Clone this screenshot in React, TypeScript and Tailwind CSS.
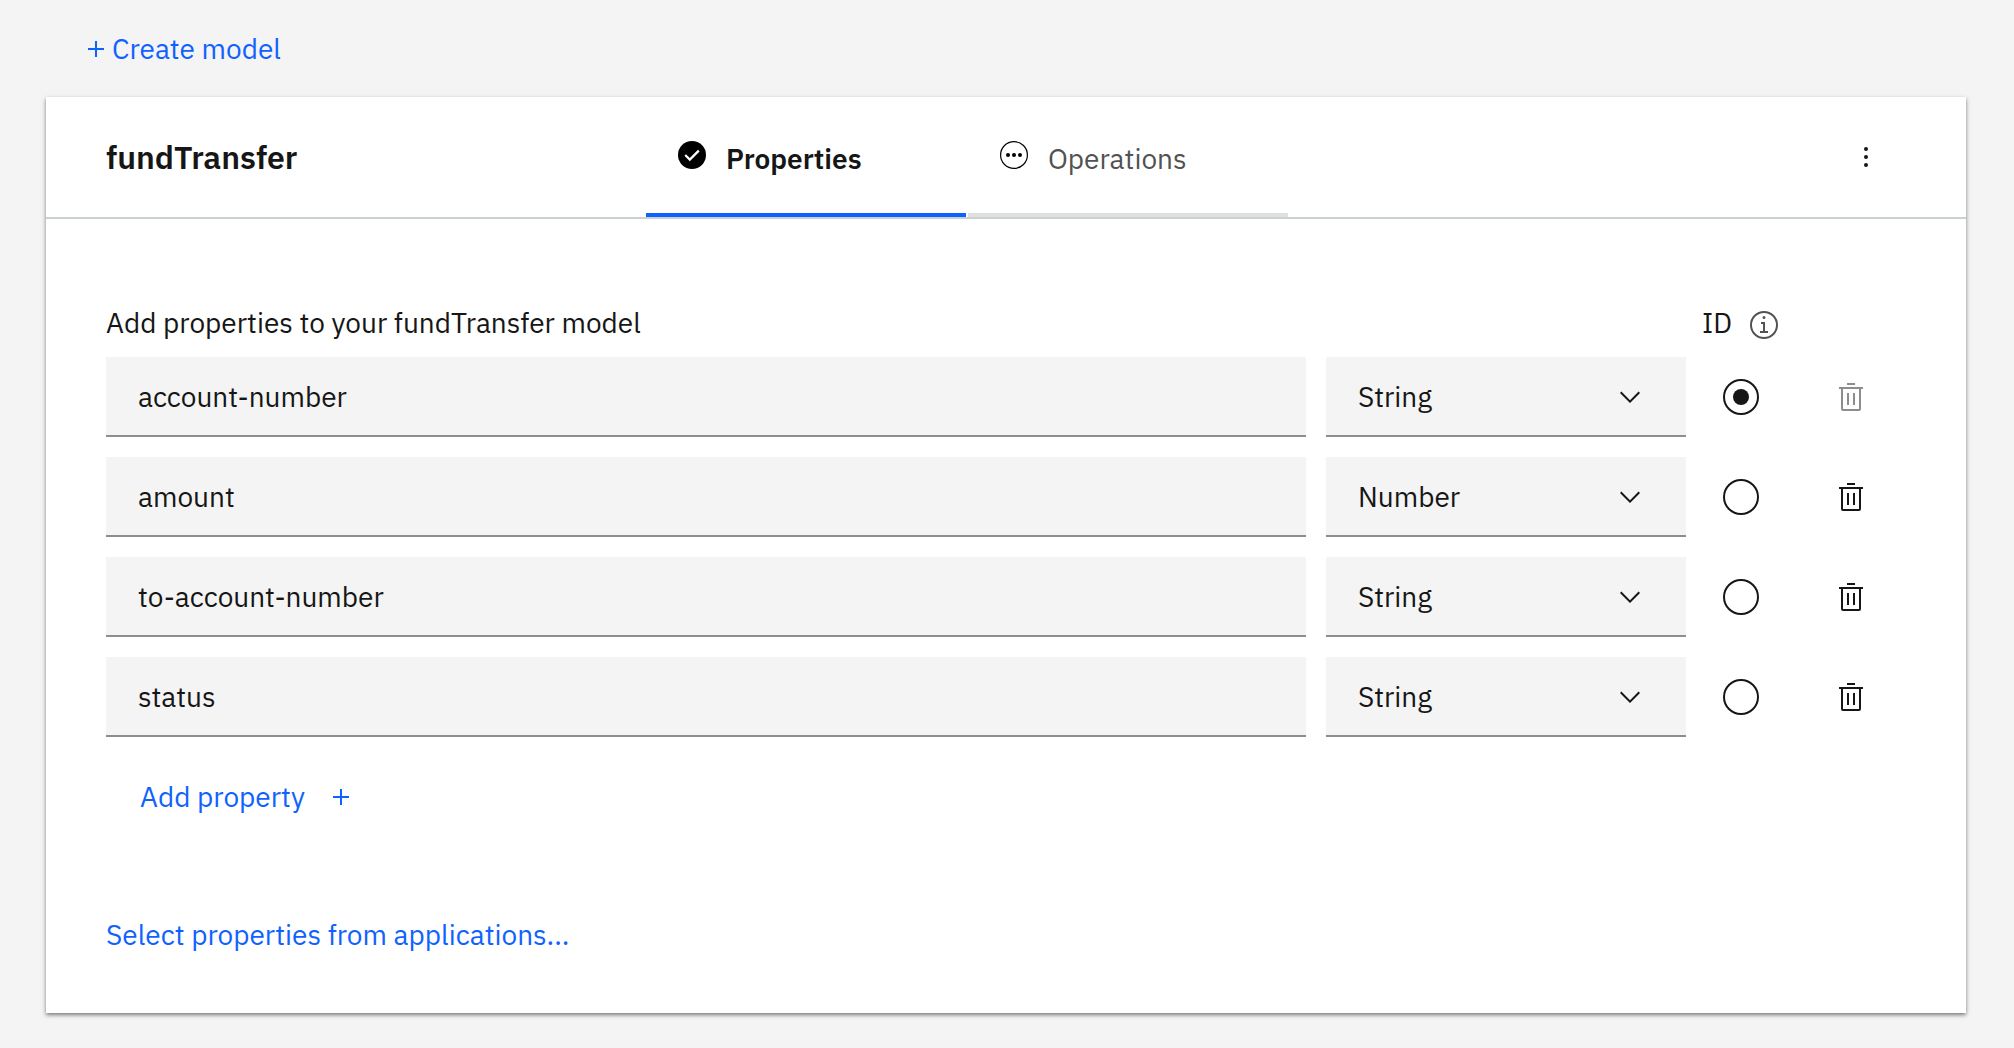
import { useState } from "react";

type Property = { name: string; type: string };

const initialProperties: Property[] = [
  { name: "account-number", type: "String" },
  { name: "amount", type: "Number" },
  { name: "to-account-number", type: "String" },
  { name: "status", type: "String" },
];

function PlusIcon() {
  return (
    <svg viewBox="0 0 16 16" className="size-4 shrink-0" fill="currentColor" aria-hidden="true">
      <path d="M9 7V0H7v7H0v2h7v7h2V9h7V7z" />
    </svg>
  );
}

function CheckIcon() {
  return (
    <svg viewBox="0 0 28 28" className="size-7 shrink-0" aria-hidden="true">
      <circle cx="14" cy="14" r="14" fill="#000" />
      <path d="M7.200 14l4.600 4.600 9-9" fill="none" stroke="#fff" strokeWidth="2.200" />
    </svg>
  );
}

function PendingIcon() {
  return (
    <svg viewBox="0 0 28 28" className="size-7 shrink-0" aria-hidden="true">
      <circle cx="14" cy="14" r="13.400" fill="none" stroke="#000" strokeWidth="1.200" />
      <circle cx="8" cy="14" r="2" />
      <circle cx="14" cy="14" r="2" />
      <circle cx="20" cy="14" r="2" />
    </svg>
  );
}

function OverflowIcon() {
  return (
    <svg viewBox="0 0 32 32" className="size-8" fill="currentColor" aria-hidden="true">
      <circle cx="16" cy="8" r="2" />
      <circle cx="16" cy="16" r="2" />
      <circle cx="16" cy="24" r="2" />
    </svg>
  );
}

function InfoIcon() {
  return (
    <svg viewBox="0 0 32 32" className="size-8" fill="currentColor" aria-hidden="true">
      <path d="M17 22v-9h-4v2h2v7h-3v2h8v-2zM16 7a1.500 1.500 0 1 0 1.500 1.500A1.500 1.500 0 0 0 16 7z" />
      <path d="M16 30a14 14 0 1 1 14-14 14 14 0 0 1-14 14zm0-26a12 12 0 1 0 12 12A12 12 0 0 0 16 4z" />
    </svg>
  );
}

function ChevronIcon() {
  return (
    <svg
      viewBox="0 0 32 32"
      className="pointer-events-none absolute top-6 right-10 size-8"
      fill="currentColor"
      aria-hidden="true"
    >
      <path d="M16 22L6 12l1.400-1.400 8.600 8.600 8.600-8.600L26 12z" />
    </svg>
  );
}

function TrashIcon() {
  return (
    <svg viewBox="0 0 32 32" className="size-8" fill="currentColor" aria-hidden="true">
      <path d="M12 12h2v12h-2zM18 12h2v12h-2z" />
      <path d="M4 6v2h2v20a2 2 0 0 0 2 2h16a2 2 0 0 0 2-2V8h2V6zm4 22V8h16v20zM12 2h8v2h-8z" />
    </svg>
  );
}

function PropertyRow({
  property,
  isId,
  onSelectId,
}: {
  property: Property;
  isId: boolean;
  onSelectId: () => void;
}) {
  return (
    <div className="flex h-20 items-center">
      <input
        type="text"
        aria-label="Property name"
        defaultValue={property.name}
        className="h-20 min-w-0 flex-1 border-b-2 border-[#8d8d8d] bg-[#f4f4f4] px-8 outline-none"
      />
      <div className="relative ml-5 w-[360px] shrink-0">
        <select
          aria-label={`Type of ${property.name}`}
          defaultValue={property.type}
          className="block h-20 w-full appearance-none border-b-2 border-[#8d8d8d] bg-[#f4f4f4] px-8 pt-0.5 outline-none"
        >
          <option>String</option>
          <option>Number</option>
          <option>Boolean</option>
        </select>
        <ChevronIcon />
      </div>
      <div className="flex w-[110px] shrink-0 justify-center">
        <input
          type="radio"
          name="model-id"
          aria-label={`Use ${property.name} as ID`}
          checked={isId}
          onChange={onSelectId}
          className="grid size-9 appearance-none place-content-center rounded-full border-2 border-[#161616] before:size-4 before:rounded-full checked:before:bg-[#161616]"
        />
      </div>
      <div className="flex w-[110px] shrink-0 justify-center">
        <button type="button" disabled={isId} aria-label={`Delete ${property.name}`} className="disabled:text-[#8d8d8d]">
          <TrashIcon />
        </button>
      </div>
    </div>
  );
}

export default function App() {
  const [idName, setIdName] = useState("account-number");

  return (
    <main className="min-h-screen bg-[#f4f4f4] pr-12 pb-9 pl-[46px] font-['IBM_Plex_Sans','Noto_Sans',sans-serif] text-[28px] leading-10 text-[#161616]">
      <div className="flex pt-[29px] pb-7 pl-[42px]">
        <button type="button" className="flex items-center gap-2 text-[#0f62fe]">
          <PlusIcon />
          Create model
        </button>
      </div>

      <section className="bg-white shadow-[0_2px_4px_rgba(0,0,0,0.5)]">
        <header className="flex h-[122px] items-stretch border-b-2 border-[#c8d2d2] pl-15">
          <h1 className="flex w-[540px] items-center text-[32px] font-semibold">fundTransfer</h1>
          <div role="tablist" className="flex gap-0.5">
            <button
              type="button"
              role="tab"
              aria-selected="true"
              className="flex w-80 items-center gap-5 border-b-4 border-[#0f62fe] px-8 font-semibold"
            >
              <CheckIcon />
              <span className="pt-2">Properties</span>
            </button>
            <button
              type="button"
              role="tab"
              aria-selected="false"
              className="flex w-80 items-center gap-5 border-b-4 border-[#e0e0e0] px-8 text-[#525252]"
            >
              <PendingIcon />
              <span className="pt-2">Operations</span>
            </button>
          </div>
          <button type="button" aria-label="Model options" className="mr-15 ml-auto flex w-20 items-center justify-center">
            <OverflowIcon />
          </button>
        </header>

        <div className="px-15 pt-21 pb-[58px]">
          <div className="mb-3.5 flex items-center">
            <h2 className="flex-1">Add properties to your fundTransfer model</h2>
            <div className="flex w-[110px] items-center justify-center gap-4">
              <span>ID</span>
              <button type="button" aria-label="About the ID property" className="pt-1 text-[#525252]">
                <InfoIcon />
              </button>
            </div>
            <div className="w-[110px]" />
          </div>

          <div className="flex flex-col gap-5">
            {initialProperties.map((property) => (
              <PropertyRow
                key={property.name}
                property={property}
                isId={property.name === idName}
                onSelectId={() => setIdName(property.name)}
              />
            ))}
            <button type="button" className="flex h-20 items-center gap-7 self-start pl-[34px] text-[#0f62fe]">
              Add property
              <PlusIcon />
            </button>
          </div>

          <a href="#applications" className="mt-[78px] block w-fit text-[#0f62fe]">
            Select properties from applications...
          </a>
        </div>
      </section>
    </main>
  );
}
